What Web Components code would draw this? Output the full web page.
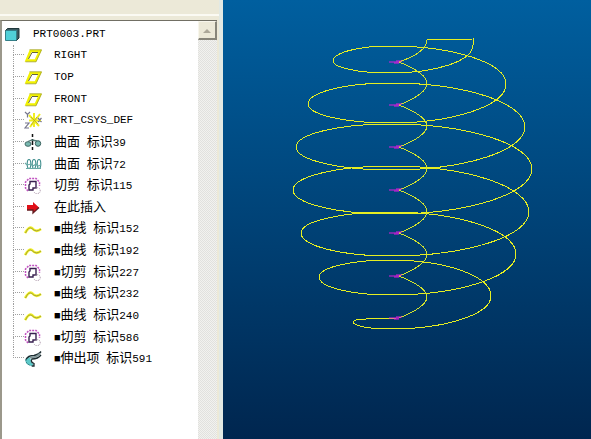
<!DOCTYPE html>
<html lang="zh-CN">
<head>
<meta charset="utf-8">
<title>PRT0003.PRT</title>
<style>
  html, body { height: 100%; margin: 0; }
  body { font-family: "Liberation Mono", "Noto Sans CJK SC", monospace; color: #000; overflow: hidden; }
</style>
</head>
<body>
<cad-workspace>
  <model-tree slot="tree" label="PRT0003.PRT">
    <tree-row icon="part" root>PRT0003.PRT</tree-row>
    <tree-row icon="plane">RIGHT</tree-row>
    <tree-row icon="plane">TOP</tree-row>
    <tree-row icon="plane">FRONT</tree-row>
    <tree-row icon="csys">PRT_CSYS_DEF</tree-row>
    <tree-row icon="revolve">曲面 标识39</tree-row>
    <tree-row icon="helix">曲面 标识72</tree-row>
    <tree-row icon="cut">切剪 标识115</tree-row>
    <tree-row icon="insert">在此插入</tree-row>
    <tree-row icon="curve">■曲线 标识152</tree-row>
    <tree-row icon="curve">■曲线 标识192</tree-row>
    <tree-row icon="cut">■切剪 标识227</tree-row>
    <tree-row icon="curve">■曲线 标识232</tree-row>
    <tree-row icon="curve">■曲线 标识240</tree-row>
    <tree-row icon="cut">■切剪 标识586</tree-row>
    <tree-row icon="sweep" last>■伸出项 标识591</tree-row>
  </model-tree>
  <model-view slot="view"></model-view>
</cad-workspace>
<script>
const ICONS = {
  part: `<path d="M3 5l2-2h11v10l-3 3V5z" fill="#3b5a60"/><path d="M2.500 5.500h11v10h-11z" fill="#50d0d8" stroke="#347f88"/><path d="M2.500 5.500l2-2h11.500v9.500l-2.500 2.500" fill="none" stroke="#20383c"/>`,
  plane: `<path d="M6.500 5h9.500l-4.500 9.500H2.500z" fill="none" stroke="#f2f200" stroke-width="2.400"/><path d="M5.500 3.800h12l-5.500 12H1.500" fill="none" stroke="#a0a030" stroke-width=".8"/><path d="M4.500 13l3.500-6.500h6" fill="none" stroke="#66663c"/>`,
  csys: `<path d="M10 2v14M5 4l10 11M16 3L6 16M5 9.500h12" stroke="#f0ee20" stroke-width="2"/><path d="M7 6l7 7M13 6l-6 8" stroke="#b5a820" stroke-width=".8"/><path d="M1 1l2.500 2.500L6 1M3.500 3.500v3M1 12h4l-4 5h4M14 7l3.500 4M17.500 7L14 11" fill="none" stroke="#77778c" stroke-width="1.200"/>`,
  revolve: `<path d="M8.500 1v3M8.500 6v6M8.500 14v3" stroke="#111" stroke-width="1.500"/><ellipse cx="4" cy="11" rx="3" ry="2.300" fill="#79b8b0" stroke="#456c69"/><ellipse cx="14" cy="10.500" rx="2.700" ry="2.800" fill="#79b8b0" stroke="#355c59"/><path d="M4 8.500l4-1.500 5 1" fill="none" stroke="#507873" stroke-width="1.300"/>`,
  helix: `<g fill="none" stroke="#3f8d8d" stroke-width="1.100"><ellipse cx="5" cy="9" rx="1.800" ry="4.500"/><ellipse cx="10" cy="9" rx="1.800" ry="4.500"/><ellipse cx="15" cy="9" rx="1.800" ry="4.500"/><path d="M1 8l2 2 4-1 2 2 3-2 2 2 3-1M2 13.500h15" stroke="#69aaa6"/></g>`,
  cut: `<path d="M4 15L1.500 12V6L5 2.500h7L15.500 6v4" fill="none" stroke="#c050c0" stroke-width="1.500" stroke-dasharray="2 1"/><path d="M6 5.500h6V12H9v2H5V9l1-1z" fill="#fff" stroke="#382050" stroke-width="1.400"/><path d="M11 12.500q4-2 5 1t-2 4-4-2" fill="none" stroke="#9b8198" stroke-dasharray="1 1"/>`,
  insert: `<path d="M3 7h6V4l6 5.500L9 15v-3H3z" fill="#e01018"/><path d="M3 12h6v3l6-5.500" fill="none" stroke="#651d21" stroke-width="1.300"/>`,
  curve: `<path d="M1 14q4-7 7-5 4 5 9 1" fill="none" stroke="#f3f228" stroke-width="2.600"/><path d="M1.500 14q3-7 6.500-4.500 4 4.500 9 .5" fill="none" stroke="#8f8d38" stroke-width=".8"/>`,
  sweep: `<path d="M5 7.500Q1 9 1.500 12.500T8 17l2-2q-4-1-3-4z" fill="#5cc8c8"/><path d="M17 2.500q-2 3-7 4-6 0-8 4" fill="none" stroke="#1c2c30" stroke-width="1.400"/><path d="M16 4.500q-3 4-10 4" fill="none" stroke="#7f9598" stroke-width="2"/><path d="M17 6q-3 4-9 4-2 3 2 4.500V17H8" fill="none" stroke="#1c2c30" stroke-width="1.300"/><path d="M2 10q-1 5 6 7" fill="none" stroke="#347c80" stroke-dasharray="2 1"/>`
};

class CadWorkspace extends HTMLElement {
  constructor() {
    super();
    this.attachShadow({ mode: "open" }).innerHTML = `
      <style>
        :host { display: grid; grid-template-columns: 223px minmax(0, 1fr); height: 100vh; }
      </style>
      <slot name="tree"></slot><slot name="view"></slot>`;
  }
}

class ModelTree extends HTMLElement {
  constructor() {
    super();
    this.attachShadow({ mode: "open" }).innerHTML = `
      <style>
        :host { display: flex; flex-direction: column; box-sizing: border-box; min-height: 0;
          background: #ece9d8; border-right: 4px solid #e2e9e4; }
        header { height: 14px; flex: none; border-bottom: 2px solid #fbfaf3; margin-bottom: 4px; }
        section { flex: 1; min-height: 0; display: grid; grid-template-columns: minmax(0, 1fr) 19px;
          border-top: 1px solid #716f64; border-left: 2px solid #9b988b; margin-right: 2px; background: #fff; }
        .rows { display: grid; grid-template-rows: repeat(16, minmax(0, 1fr)); height: 346px; padding-top: 2px; }
        .bar { background: repeating-conic-gradient(#e1e1de 0 25%, #f2f2ef 0 50%) 0 0 / 2px 2px; }
        button { display: grid; place-items: center; box-sizing: border-box; width: 100%; height: 19px;
          padding: 0; background: #ece9d8; border: 1px solid #f8f6ec; border-right: 2px solid #87857a;
          border-bottom: 2px solid #87857a; border-radius: 0; }
      </style>
      <header></header>
      <section>
        <div class="rows" role="tree"><slot></slot></div>
        <div class="bar"><button type="button" aria-label="向上滚动">
          <svg width="8" height="5" viewBox="0 0 8 5"><path d="M0 5l4-4 4 4z" fill="#aca899"/></svg>
        </button></div>
      </section>`;
  }
  connectedCallback() {
    this.shadowRoot.querySelector("[role=tree]").setAttribute("aria-label", this.getAttribute("label"));
  }
}

class TreeRow extends HTMLElement {
  constructor() {
    super();
    this.attachShadow({ mode: "open" });
  }
  connectedCallback() {
    this.setAttribute("role", "treeitem");
    /* Han runs are set larger than the Latin ones, so that one is two cells wide. */
    const label = this.textContent.trim().split(/([\u4e00-\u9fff]+)/).filter(Boolean)
      .map(t => /[\u4e00-\u9fff]/.test(t) ? `<span class="han">${t}</span>` : t).join("");
    this.shadowRoot.innerHTML = `
      <style>
        :host { display: flex; align-items: center; min-width: 0; padding-left: 11px;
          font: 11px/20px "Liberation Mono", monospace; white-space: pre; }
        :host([root]) { padding-left: 1px; }
        :host([root]) .guide { display: none; }
        .guide { width: 11px; align-self: stretch; display: grid; grid-template-rows: 1fr 1fr; }
        .guide b { border-left: 1px dotted #a0a0a0; }
        .guide b:first-child { border-bottom: 1px dotted #a0a0a0; }
        :host([last]) .guide b:last-child { border-left: 0; }
        svg { flex: none; margin-right: 12px; }
        .han { font: 13px/20px "Noto Sans CJK SC", sans-serif; }
      </style>
      <div class="guide"><b></b><b></b></div>
      <svg width="18" height="18" viewBox="0 0 18 18" aria-hidden="true">${ICONS[this.getAttribute("icon")]}</svg>
      <span>${label}</span>`;
  }
}

class ModelView extends HTMLElement {
  constructor() {
    super();
    const K = 0.5523, CX = 390;
    /* Each turn: left extreme, top, right extreme, then the bottom of the next loop. */
    const turns = [
      [333, 61, 46, 506, 84, 123], [308, 104, 83, 525, 127, 170], [296, 147, 124, 532, 169, 214],
      [293, 190, 166, 529, 212, 256], [301, 233, 212, 516, 254, 295], [319, 277, 260, 491, 296, 329]
    ];
    const lefts = [...turns.slice(1).map(t => [t[0], t[1]]), [353, 322]];
    const fromRight = (xr, yr, yb, xl, yl) =>
      `C${xr} ${yr + K * (yb - yr)} ${CX + K * (xr - CX)} ${yb} ${CX} ${yb}` +
      `C${CX - K * (CX - xl)} ${yb} ${xl} ${yl + K * (yb - yl)} ${xl} ${yl}`;
    let coil = "M427 40L473 39V44" + fromRight(474, 46, 73, 333, 61);
    turns.forEach(([xl, yl, yt, xr, yr, yb], n) => {
      coil += `C${xl} ${yl - K * (yl - yt)} ${CX - K * (CX - xl)} ${yt} ${CX} ${yt}` +
        `C${CX + K * (xr - CX)} ${yt} ${xr} ${yr - K * (yr - yt)} ${xr} ${yr}` +
        fromRight(xr, yr, yb, ...lefts[n]);
    });
    coil += "Q354 319 366 319L396 318";
    const cusps = [62, 105, 147, 190, 233, 276, 318];
    let wave = "M427 40Q427 52 399 62";
    cusps.slice(1).forEach((y, n) => {
      const p = cusps[n], m = (p + y) / 2;
      wave += `C414 ${p + 6} 427 ${m - 8} 427 ${m}S414 ${y - 6} 399 ${y}`;
    });
    const marks = cusps.map(y => `M389 ${y}h10M394 ${y + 1}h5M396 ${y - 1}h6`).join("");
    this.attachShadow({ mode: "open" }).innerHTML = `
      <style>
        :host { display: block; min-width: 0; min-height: 0; background: linear-gradient(#005f9f, #00264f); }
        svg { display: block; width: 100%; height: 100%; }
      </style>
      <svg viewBox="223 0 368 439" preserveAspectRatio="xMinYMin meet" fill="none" role="img" aria-label="螺旋曲线">
        <path d="${coil}" stroke="#e6ee22" shape-rendering="crispEdges"/>
        <path d="${wave}" stroke="#d3e32d" shape-rendering="crispEdges"/>
        <path d="${marks}" stroke="#e01be0"/>
      </svg>`;
  }
}

customElements.define("cad-workspace", CadWorkspace);
customElements.define("model-tree", ModelTree);
customElements.define("tree-row", TreeRow);
customElements.define("model-view", ModelView);
</script>
</body>
</html>
